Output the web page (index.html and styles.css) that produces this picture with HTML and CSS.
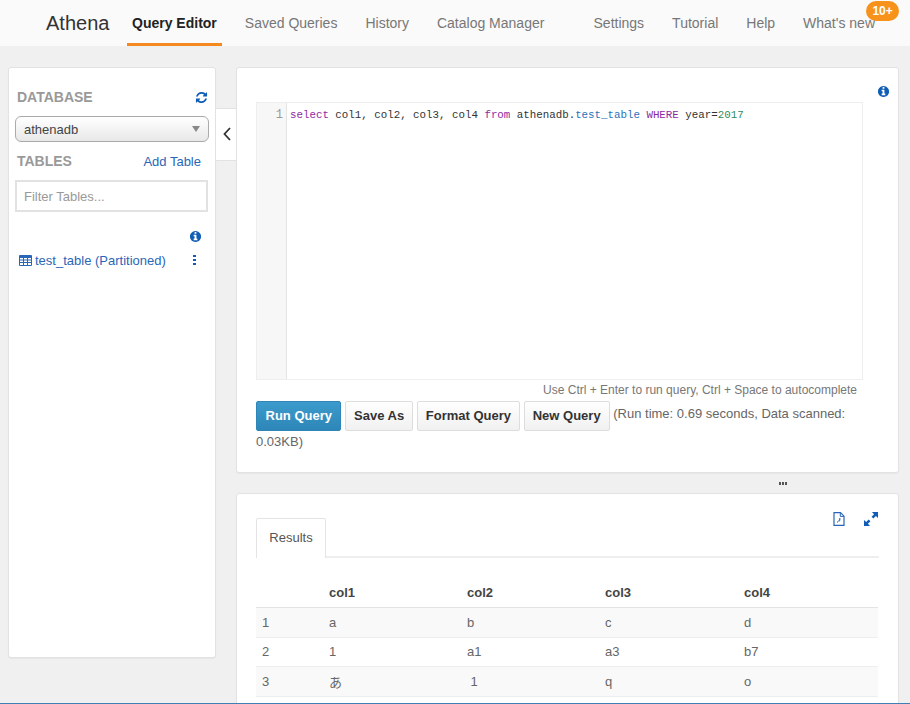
FILE: index.html
```html
<!DOCTYPE html>
<html lang="en">
<head>
<meta charset="utf-8">
<title>Athena</title>
<link rel="stylesheet" href="styles.css">
</head>
<body>
<header class="topbar">
  <div class="logo">Athena</div>
  <nav class="nav">
    <a class="nav-item active">Query Editor</a>
    <a class="nav-item">Saved Queries</a>
    <a class="nav-item">History</a>
    <a class="nav-item">Catalog Manager</a>
  </nav>
  <nav class="nav nav-right">
    <a class="nav-item">Settings</a>
    <a class="nav-item">Tutorial</a>
    <a class="nav-item">Help</a>
    <a class="nav-item whats-new">What's new<span class="badge">10+</span></a>
  </nav>
</header>
<main class="layout">
  <aside class="card sidebar">
    <div class="side-row db-row">
      <span class="side-label">DATABASE</span>
      <svg class="icon icon-refresh" viewBox="0 0 1792 1792"><path d="M1639 1056q0 5-1 7-64 268-268 434.5t-478 166.5q-146 0-282.5-55t-243.5-157l-129 129q-19 19-45 19t-45-19-19-45v-448q0-26 19-45t45-19h448q26 0 45 19t19 45-19 45l-137 137q71 66 161 102t187 36q134 0 250-65t186-179q11-17 53-117 8-23 30-23h192q13 0 22.5 9.5t9.5 22.5zm25-800v448q0 26-19 45t-45 19h-448q-26 0-45-19t-19-45 19-45l138-138q-148-137-349-137-134 0-250 65t-186 179q-11 17-53 117-8 23-30 23h-199q-13 0-22.5-9.5t-9.5-22.5v-7q65-268 270-434.5t480-166.5q146 0 284 55.5t245 156.5l130-129q19-19 45-19t45 19 19 45z"/></svg>
    </div>
    <div class="select"><span>athenadb</span><span class="caret"></span></div>
    <div class="side-row tables-row">
      <span class="side-label">TABLES</span>
      <a class="link">Add Table</a>
    </div>
    <div class="filter">Filter Tables...</div>
    <div class="info-row">
      <svg class="icon icon-info" viewBox="0 0 1792 1792"><path d="M1152 1376v-160q0-14-9-23t-23-9h-96v-512q0-14-9-23t-23-9h-320q-14 0-23 9t-9 23v160q0 14 9 23t23 9h96v320h-96q-14 0-23 9t-9 23v160q0 14 9 23t23 9h448q14 0 23-9t9-23zm-128-896v-160q0-14-9-23t-23-9h-192q-14 0-23 9t-9 23v160q0 14 9 23t23 9h192q14 0 23-9t9-23zm640 416q0 209-103 385.5t-279.5 279.5-385.5 103-385.5-103-279.5-279.5-103-385.5 103-385.5 279.5-279.5 385.5-103 385.5 103 279.5 279.5 103 385.5z"/></svg>
    </div>
    <div class="table-item">
      <svg class="icon icon-table" viewBox="0 0 13 11"><path fill-rule="evenodd" d="M1 0h11a1 1 0 0 1 1 1v9a1 1 0 0 1-1 1H1a1 1 0 0 1-1-1V1a1 1 0 0 1 1-1zM1 3v1.6h3V3zm4 0v1.6h3V3zm4 0v1.6h3V3zM1 5.5v1.6h3V5.500zm4 0v1.600h3V5.500zm4 0v1.600h3V5.500zM1 8v2h3V8zm4 0v2h3V8zm4 0v2h3V8z"/></svg>
      <a class="link table-name">test_table (Partitioned)</a>
      <span class="kebab"><i></i><i></i><i></i></span>
    </div>
  </aside>
  <div class="handle">
    <svg class="chevron" viewBox="0 0 8 14"><path d="M7 1 1.500 7 7 13" fill="none" stroke="#333" stroke-width="1.800"/></svg>
  </div>
  <div class="content">
    <section class="card editor-card">
      <div class="editor-top">
        <svg class="icon icon-info" viewBox="0 0 1792 1792"><path d="M1152 1376v-160q0-14-9-23t-23-9h-96v-512q0-14-9-23t-23-9h-320q-14 0-23 9t-9 23v160q0 14 9 23t23 9h96v320h-96q-14 0-23 9t-9 23v160q0 14 9 23t23 9h448q14 0 23-9t9-23zm-128-896v-160q0-14-9-23t-23-9h-192q-14 0-23 9t-9 23v160q0 14 9 23t23 9h192q14 0 23-9t9-23zm640 416q0 209-103 385.5t-279.5 279.5-385.5 103-385.5-103-279.5-279.5-103-385.5 103-385.5 279.5-279.5 385.5-103 385.5 103 279.5 279.5 103 385.5z"/></svg>
      </div>
      <div class="editor">
        <div class="gutter">1</div>
        <div class="code"><span class="kw">select</span> col1, col2, col3, col4 <span class="kw">from</span> athenadb.<span class="id">test_table</span> <span class="kw">WHERE</span> year=<span class="num">2017</span></div>
      </div>
      <div class="hint">Use Ctrl + Enter to run query, Ctrl + Space to autocomplete</div>
      <div class="actions">
        <button class="btn btn-primary">Run Query</button>
        <button class="btn">Save As</button>
        <button class="btn">Format Query</button>
        <button class="btn">New Query</button>
        <span class="status">(Run time: 0.69 seconds, Data scanned: 0.03KB)</span>
      </div>
    </section>
    <div class="splitter"><i></i><i></i><i></i></div>
    <section class="card results-card">
      <div class="results-tools">
        <svg class="icon icon-file" viewBox="0 0 12 14"><path d="M1 .7h6.500L11 4.200v9.100H1z" fill="none" stroke="#2a66b8" stroke-width="1.200"/><path d="M7.300.7v3.700H11" fill="none" stroke="#2a66b8"/><path d="M4 10.500c1.500-1 2.500-2.500 2.800-4.200.3 1.500 0 3-.8 2.700" fill="none" stroke="#2a66b8"/></svg>
        <svg class="icon icon-expand" viewBox="0 0 15 15"><path d="M8.500 0H15v6.500l-2.300-2.300-2.700 2.700-1.900-1.900 2.700-2.700zM6.500 15H0V8.500l2.300 2.300 2.700-2.700 1.900 1.900-2.700 2.700z"/></svg>
      </div>
      <div class="tabs"><div class="tab">Results</div></div>
      <table class="grid">
        <thead>
          <tr><th class="c0"></th><th class="c1">col1</th><th class="c1">col2</th><th class="c3">col3</th><th>col4</th></tr>
        </thead>
        <tbody>
          <tr><td>1</td><td>a</td><td>b</td><td>c</td><td>d</td></tr>
          <tr><td>2</td><td>1</td><td>a1</td><td>a3</td><td>b7</td></tr>
          <tr><td>3</td><td>あ</td><td>&nbsp;1</td><td>q</td><td>o</td></tr>
        </tbody>
      </table>
    </section>
  </div>
</main>
</body>
</html>
```

FILE: styles.css
```css
* { box-sizing: border-box; }
html, body { margin: 0; height: 704px; overflow: hidden; }
body {
  background: #f0f0f0;
  font-family: "Liberation Sans", Arial, "Noto Sans CJK JP", sans-serif;
  font-size: 13px;
  color: #555;
  border-bottom: 1px solid #3f7fb5;
  display: flex;
  flex-direction: column;
}
.topbar {
  height: 46px;
  flex: none;
  background: #fafafa;
  display: flex;
  padding: 0 30px 0 46px;
  font-size: 14px;
}
.logo { font-size: 20px; color: #333; line-height: 47px; width: 76px; flex: none; }
.nav { display: flex; gap: 18px; margin-left: 5px; }
.nav-right { margin-left: auto; }
.nav-item {
  position: relative;
  padding: 0 5px;
  line-height: 47px;
  height: 46px;
  color: #777;
  white-space: nowrap;
}
.nav-item.active { color: #222; font-weight: bold; border-bottom: 3px solid #f5891f; }
.badge {
  position: absolute;
  left: 68px;
  top: 1px;
  width: 33px;
  height: 20px;
  border-radius: 10px;
  background: #f7931a;
  color: #fff;
  font-size: 12px;
  font-weight: bold;
  line-height: 20px;
  text-align: center;
}
.layout {
  flex: 1;
  min-height: 0;
  overflow: hidden;
  display: flex;
  align-items: flex-start;
  padding: 21px 11px 0 8px;
}
.card {
  background: #fff;
  border: 1px solid #e2e2e2;
  border-radius: 3px;
  box-shadow: 0 1px 1px rgba(0,0,0,.04);
}
.sidebar {
  width: 208px;
  height: 591px;
  flex: none;
  padding: 20px 6px 0;
}
.side-row { display: flex; justify-content: space-between; align-items: center; height: 18px; }
.side-label { font-size: 14px; font-weight: bold; color: #999; padding-left: 2px; }
.db-row { padding-right: 1px; }
.tables-row { margin-top: 10px; padding-right: 8px; }
.icon { display: block; fill: #0f5db5; flex: none; }
.icon-refresh { width: 13px; height: 13px; }
.icon-info { width: 13px; height: 13px; }
.select {
  margin-top: 10px;
  height: 26px;
  border: 1px solid #aaa;
  border-radius: 6px;
  background: linear-gradient(#fff, #e8e8e8);
  padding: 0 8px;
  display: flex;
  align-items: center;
  justify-content: space-between;
  color: #444;
}
.caret {
  width: 0;
  height: 0;
  border-left: 4px solid transparent;
  border-right: 4px solid transparent;
  border-top: 6px solid #888;
}
.filter {
  margin-top: 10px;
  height: 32px;
  width: 193px;
  border: 2px solid #e2e2e2;
  color: #999;
  line-height: 30px;
  padding-left: 7px;
}
.info-row { margin-top: 18px; height: 13px; display: flex; justify-content: flex-end; padding-right: 7px; }
.table-item { margin-top: 8px; height: 18px; display: flex; align-items: center; padding: 0 13px 0 4px; }
.icon-table { width: 13px; height: 11px; fill: #2a66b8; }
.table-name { margin-left: 3px; flex: 1; }
.link { color: #2a66b8; white-space: nowrap; }
.kebab { display: flex; flex-direction: column; gap: 2px; }
.kebab i { width: 3px; height: 2px; background: #0f5db5; display: block; }
.handle {
  width: 20px;
  height: 53px;
  flex: none;
  margin-top: 41px;
  background: #fff;
  border-top: 1px solid #e2e2e2;
  border-bottom: 1px solid #e2e2e2;
  display: flex;
  align-items: center;
  justify-content: center;
  padding: 0 0 2px 1px;
}
.chevron { width: 8px; height: 14px; display: block; }
.content { width: 663px; flex: none; display: flex; flex-direction: column; }
.editor-card { height: 406px; padding: 0 19px; }
.editor-top { height: 34px; display: flex; justify-content: flex-end; padding: 17px 0 0; margin-right: -11px; }
.editor {
  width: 607px;
  height: 278px;
  border: 1px solid #eee;
  display: flex;
}
.gutter {
  width: 30px;
  flex: none;
  background: #f7f7f7;
  border-right: 1px solid #e4e4e4;
  font-family: "Liberation Mono", monospace;
  font-size: 12px;
  color: #999;
  text-align: right;
  padding: 4px 3px 0 0;
  line-height: 16px;
}
.code {
  font-family: "Liberation Mono", monospace;
  font-size: 10.800px;
  line-height: 16px;
  padding: 4px 0 0 3px;
  color: #333;
  white-space: pre;
}
.kw { color: #8e2aa3; }
.id { color: #2a73b8; }
.num { color: #2f8a5c; }
.hint { height: 21px; width: 601px; text-align: right; font-size: 12px; color: #777; line-height: 20px; }
.actions { line-height: 26.500px; color: #666; }
.btn {
  font-family: inherit;
  font-size: 13px;
  font-weight: bold;
  height: 30px;
  padding: 0 8px 2px;
  border: 1px solid #ddd;
  border-radius: 2px;
  background: linear-gradient(#fff, #f1f1f1);
  color: #333;
}
.btn-primary {
  padding: 0 8.500px 2px;
  color: #fff;
  background: linear-gradient(#3c9bcc, #2e86b8);
  border-color: #2e86b8;
}
.status { position: relative; top: -2px; }
.splitter { height: 20px; display: flex; justify-content: center; align-items: center; gap: 1px; padding-left: 431px; padding-top: 1px; flex: none; }
.splitter i { width: 2px; height: 3px; background: #555; display: block; }
.results-card { height: 230px; padding: 0 19px; position: relative; }
.results-tools { position: absolute; right: 20px; top: 18px; display: flex; gap: 19px; align-items: center; }
.icon-file { width: 12px; height: 14px; }
.icon-expand { width: 14px; height: 14px; }
.tabs { padding-top: 24px; border-bottom: 2px solid #eee; height: 64px; }
.tab {
  width: 70px;
  height: 40px;
  border: 1px solid #e4e4e4;
  border-bottom: 0;
  background: #fff;
  border-radius: 2px 2px 0 0;
  text-align: center;
  line-height: 38px;
  color: #555;
}
.grid { width: 622px; border-collapse: collapse; table-layout: fixed; margin-top: 20px; }
.grid th, .grid td { text-align: left; padding: 0 6px; height: 29.500px; }
.grid th { font-weight: bold; color: #444; border-bottom: 1px solid #e4e4e4; }
.grid td { border-bottom: 1px solid #eee; color: #666; }
.grid tbody tr:nth-child(odd) { background: #f9f9f9; }
.c0 { width: 67px; }
.c1 { width: 138px; }
.c3 { width: 139px; }
```
